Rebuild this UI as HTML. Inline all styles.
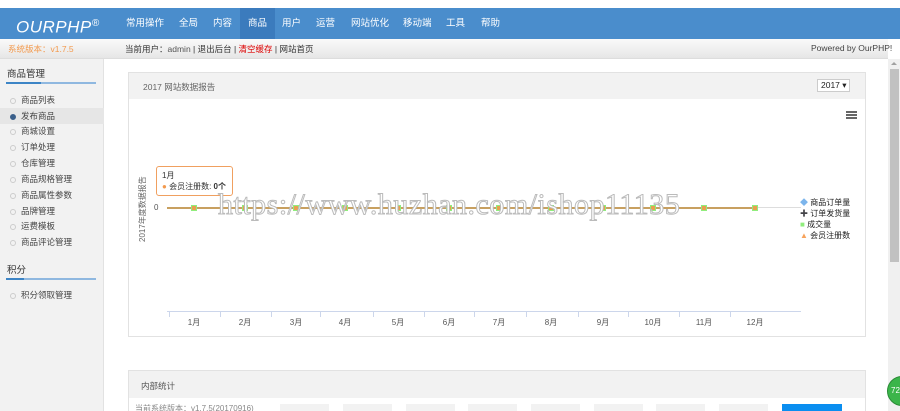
<!DOCTYPE html>
<html><head><meta charset="utf-8">
<style>
*{margin:0;padding:0;box-sizing:border-box}
html,body{width:900px;height:411px;overflow:hidden}
body{position:relative;background:#fff;font-family:"Liberation Sans","Noto Sans CJK SC",sans-serif;font-size:9px;color:#333}
.a{position:absolute;white-space:nowrap}
#top{left:0;top:0;width:900px;height:8px;background:#fff}
#nav{left:0;top:8px;width:900px;height:31px;background:#4a8dcc}
#nav .i{position:absolute;top:0;height:31px;line-height:31px;color:#fff;font-size:9.5px}
#sub{left:0;top:39px;width:888px;height:20px;background:linear-gradient(#fafafa,#e6e6e6);border-bottom:1px solid #ddd}
#side{left:0;top:59px;width:104px;height:352px;background:#f2f2f2;border-right:1px solid #e2e2e2}
.si{position:absolute;left:0;width:104px;height:16px;line-height:16px;padding-left:21px;font-size:8.5px;color:#444}
.si:before{content:"";position:absolute;left:10px;top:6px;width:4px;height:4px;border:1px solid #ccc;border-radius:50%}
.si.on{background:#e6e6e6}
.si.on:before{background:#3a5f8a;border-color:#3a5f8a}
.sh{position:absolute;left:7px;font-size:9.5px;color:#333}
.ul{position:absolute;left:6px;width:90px;height:2px;background:#8fb8e0}
.ul b{display:block;height:2px;background:#3d85c6}
.panel{border:1px solid #e2e2e2;background:#fff}
.ph{position:absolute;left:0;right:0;top:0;background:#f2f2f2}
.gb{position:absolute;top:404px;width:49px;height:7px;background:#f2f2f2}
</style></head><body>
<div class="a" id="top"></div>
<div class="a" id="nav">
<div class="a" style="left:16px;top:0;line-height:31px;color:#fff;font-size:17px;font-style:italic;letter-spacing:0.5px">OURPHP<sup style="font-size:10px">®</sup></div>
<div class="a" style="left:240px;top:0;width:35px;height:31px;background:#3b7bbd"></div>
<div class="i" style="left:126px">常用操作</div>
<div class="i" style="left:179px">全局</div>
<div class="i" style="left:213px">内容</div>
<div class="i" style="left:248px">商品</div>
<div class="i" style="left:282px">用户</div>
<div class="i" style="left:316px">运营</div>
<div class="i" style="left:351px">网站优化</div>
<div class="i" style="left:403px">移动端</div>
<div class="i" style="left:446px">工具</div>
<div class="i" style="left:481px">帮助</div>
</div>
<div class="a" id="sub">
<div class="a" style="left:8px;top:4px;color:#f39a4e;font-size:8.5px">系统版本：v1.7.5</div>
<div class="a" style="left:125px;top:4px;font-size:8.5px;color:#333">当前用户：<span style="color:#555">admin</span> | 退出后台 | <span style="color:#d00">清空缓存</span> | 网站首页</div>
<div class="a" style="left:811px;top:4px;font-size:8.5px;color:#444">Powered by OurPHP!</div>
</div>
<div class="a" id="side">
<div class="sh" style="top:7px">商品管理</div>
<div class="ul" style="top:23px"><b style="width:35px"></b></div>
<div class="si" style="top:33px">商品列表</div>
<div class="si on" style="top:49px">发布商品</div>
<div class="si" style="top:64px">商城设置</div>
<div class="si" style="top:80px">订单处理</div>
<div class="si" style="top:96px">仓库管理</div>
<div class="si" style="top:112px">商品规格管理</div>
<div class="si" style="top:128px">商品属性参数</div>
<div class="si" style="top:144px">品牌管理</div>
<div class="si" style="top:159px">运费模板</div>
<div class="si" style="top:175px">商品评论管理</div>
<div class="sh" style="top:203px">积分</div>
<div class="ul" style="top:219px"><b style="width:18px"></b></div>
<div class="si" style="top:228px">积分领取管理</div>
</div>
<div class="a" style="left:888px;top:59px;width:12px;height:352px;background:#f0f0f0"></div>
<div class="a" style="left:890px;top:69px;width:9px;height:193px;background:#c1c1c1"></div>
<div class="a" style="left:891px;top:62px;width:0;height:0;border-left:3px solid transparent;border-right:3px solid transparent;border-bottom:3px solid #a0a0a0"></div>
<div class="a panel" style="left:128px;top:72px;width:738px;height:265px">
<div class="ph" style="height:26px"><span class="a" style="left:14px;top:8px;color:#666;font-size:8.5px">2017 网站数据报告</span>
<div class="a" style="left:688px;top:6px;width:33px;height:13px;border:1px solid #ccc;background:#fff;font-size:8.5px;line-height:11px;padding-left:3px;color:#222">2017 ▾</div></div>
<div class="a" style="left:717px;top:38px;width:11px;height:2px;background:#666;box-shadow:0 3px 0 #666,0 6px 0 #666"></div>
</div>
<div class="a" style="left:167px;top:207px;width:634px;height:1px;background:#ddd"></div>
<div class="a" style="left:167px;top:207px;width:590px;height:2px;background:#c8a060"></div>
<div class="a" style="left:154px;top:203px;font-size:8px;color:#555">0</div>
<div class="a" style="left:137px;top:242px;transform:rotate(-90deg);transform-origin:0 0;font-size:8px;color:#666">2017年度数据报告</div>
<div id="pts"></div>
<div class="a" style="left:156px;top:166px;width:77px;height:30px;border:1px solid #f0a060;border-radius:3px;background:#fff;padding:3px 5px;font-size:8px;line-height:11px">1月<br><span style="color:#f39a4e">●</span> 会员注册数: <b>0个</b></div>
<div class="a" style="left:167px;top:311px;width:634px;height:1px;background:#ccd6eb"></div>
<div class="a" style="left:800px;top:197px;font-size:8px;line-height:11px;color:#222">
<div><span style="color:#7cb5ec">◆</span> 商品订单量</div>
<div><span style="color:#434348">✚</span> 订单发货量</div>
<div><span style="color:#90ed7d">■</span> 成交量</div>
<div><span style="color:#f7a35c">▲</span> 会员注册数</div>
</div>
<div class="a" style="left:218px;top:188px;font-family:'Liberation Serif',serif;font-size:30px;color:#fff;-webkit-text-stroke:1px #bbb;letter-spacing:0.5px">https://www.huzhan.com/ishop11135</div>
<div class="a panel" style="left:128px;top:370px;width:738px;height:50px">
<div class="ph" style="height:27px"><span class="a" style="left:12px;top:9px;color:#555;font-size:8.5px">内部统计</span></div>
<div class="a" style="left:6px;top:32px;font-size:8px;color:#888">当前系统版本：v1.7.5(20170916)</div>
</div>
<div class="gb" style="left:280px"></div><div class="gb" style="left:343px"></div><div class="gb" style="left:406px"></div>
<div class="gb" style="left:468px"></div><div class="gb" style="left:531px"></div><div class="gb" style="left:594px"></div>
<div class="gb" style="left:656px"></div><div class="gb" style="left:719px"></div>
<div class="a" style="left:782px;top:404px;width:60px;height:7px;background:#0a8ef0"></div>
<div class="a" style="left:887px;top:376px;width:30px;height:30px;border-radius:50%;background:#3bb54a;border:1px solid #2a8a36;color:#fff;font-size:8px;line-height:28px;padding-left:3px">72</div>
<script>
var h='',xs=[194,245,296,345,398,449,499,551,603,653,704,755];
xs.forEach(function(x,i){
h+='<div class="a" style="left:'+(x-3)+'px;top:205px;width:6px;height:6px;background:#90ed7d"></div>';
h+='<div class="a" style="left:'+(x-2)+'px;top:206px;width:4px;height:4px;background:#e8a050"></div>';
h+='<div class="a" style="left:'+(x-25)+'px;top:312px;width:1px;height:5px;background:#ccd6eb"></div>';
h+='<div class="a" style="left:'+(x-12)+'px;top:317px;width:24px;text-align:center;font-size:8px;color:#555">'+(i+1)+'月</div>';
});
document.getElementById('pts').innerHTML=h;
</script>
</body></html>
